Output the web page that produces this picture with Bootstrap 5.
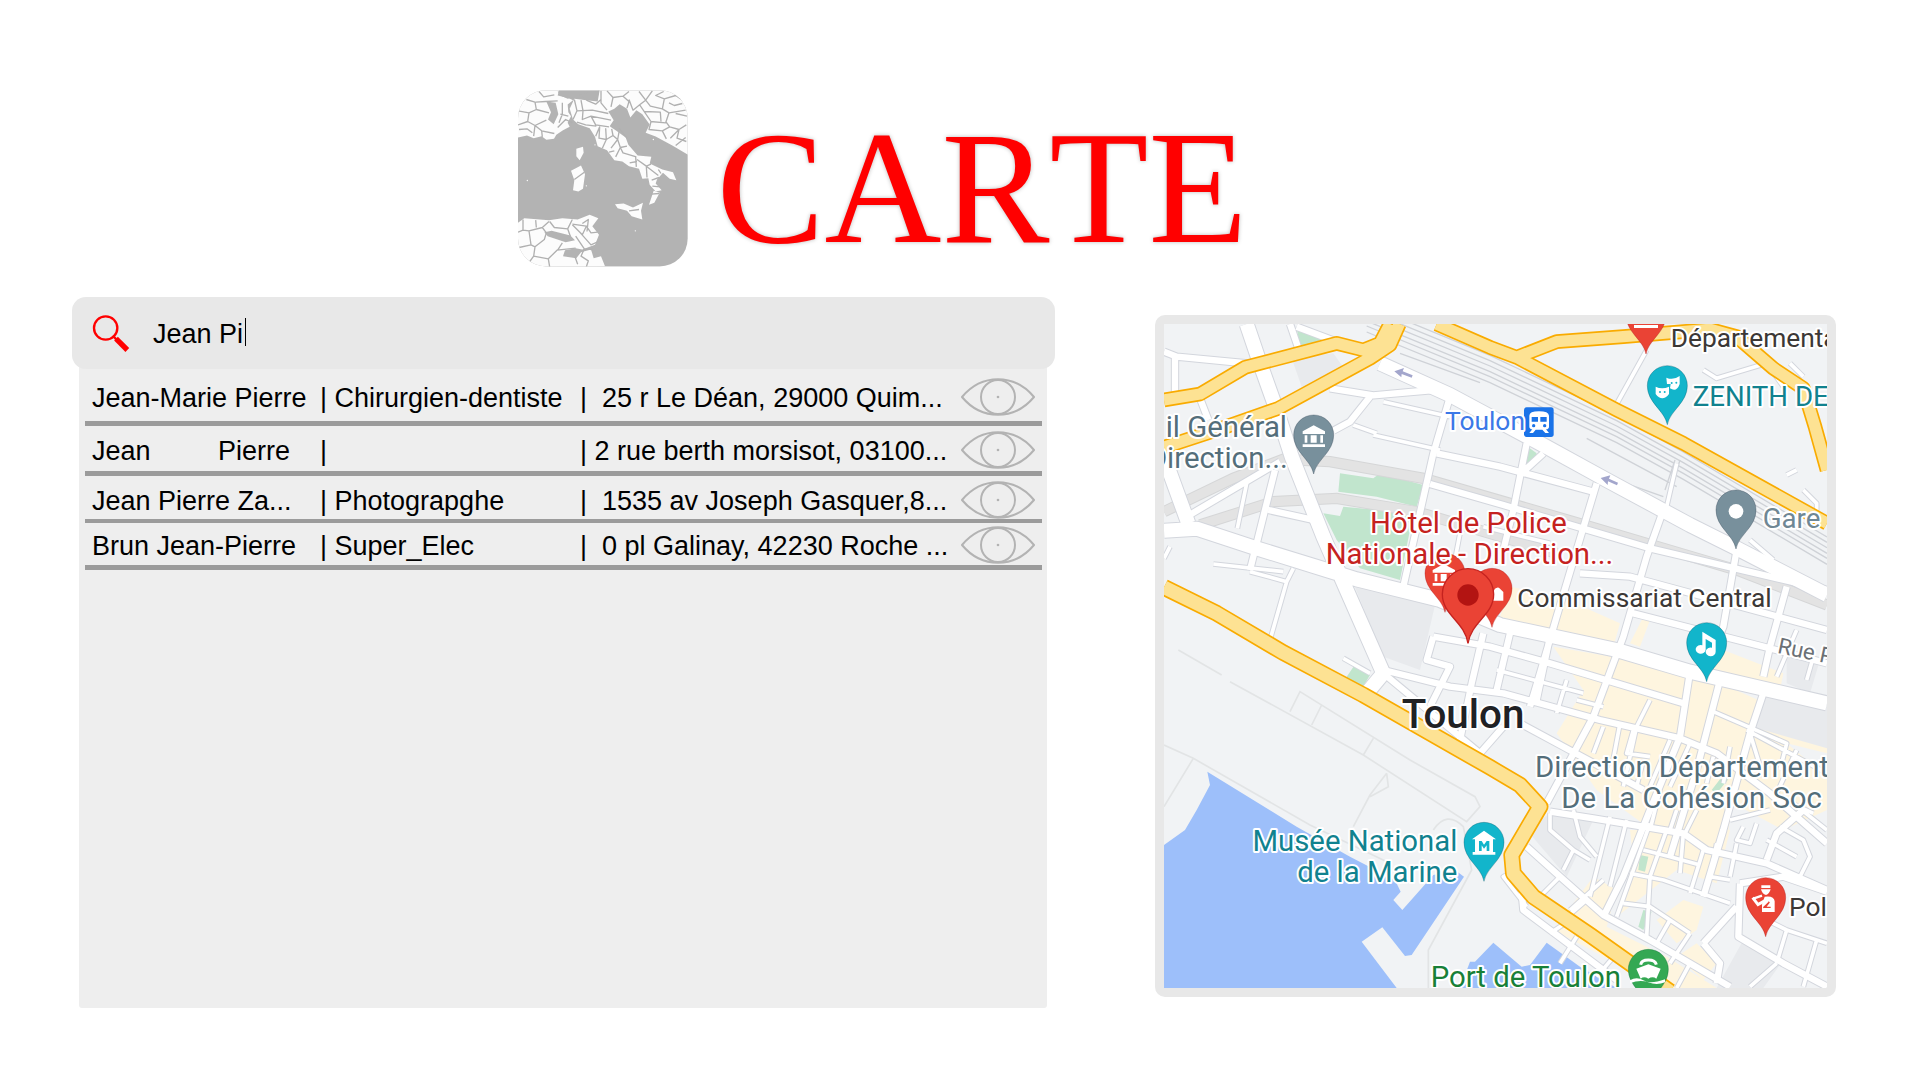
<!DOCTYPE html>
<html lang="fr">
<head>
<meta charset="utf-8">
<meta name="viewport" content="width=device-width, initial-scale=1">
<title>Carte</title>
<link href="https://cdn.jsdelivr.net/npm/bootstrap@5.3.0/dist/css/bootstrap.min.css" rel="stylesheet">
<style>
body{background:#fff;color:#000;font-family:"Liberation Sans",Arial,sans-serif;font-size:27px}
.page-head{padding:90px 0 0 27%;height:297px;gap:28px}
.brand-map{width:170px;height:177px}
.brand-title{font-family:"Liberation Serif",serif;font-size:162px;line-height:196px;font-kerning:none;color:red;text-shadow:0 0 4px #bbb}
.page-main{padding:0 84px 72px 72px;gap:100px}
.col-search{flex:983 1 0;min-width:0}
.col-map{flex:681 1 0;min-width:0;padding-top:18px}
.search-box{background:#e8e8e8;border-radius:14px;height:72px;padding:0 20px;gap:23px;z-index:1}
.search-box svg{width:38px;height:38px}
.search-input,.search-input:focus{background:transparent;border:0;box-shadow:none;color:#000;font-size:27px;line-height:36px;padding:2px 0 0;caret-color:transparent;outline:0}
.caret{left:92px;top:4px;width:1px;height:28px;background:#000}
.results{background:#eee;margin:-16px 8px 0 7px;padding:16px 5px 0 6px;border-radius:0 0 3px 3px}
.results table{table-layout:fixed;border-collapse:separate;border-spacing:0}
.results tr{--top:5px;--bottom:2px;--line:5px}
.results tr:nth-child(1){--top:9px;--bottom:5px}
.results tr:nth-child(3){--bottom:0px;--line:4px}
.results tr:nth-child(4){--top:3px;--bottom:1px}
.results td{padding:calc(var(--top) + 2px) 0 var(--bottom);border-bottom:var(--line) solid #9b9b9b;line-height:36px;white-space:pre;vertical-align:top}
.results td:first-child{padding-left:7px}
.results td:last-child{padding-top:var(--top)}
.c-name{width:235px}.c-job{width:260px}.c-eye{width:81px}
.eye-btn{display:block;width:74px;height:38px}
.eye-btn svg{display:block;width:74px;height:38px}
.map-frame{border:9px solid #e8e8e8;border-radius:10px;background:#f1f3f5}
.lbl text{font-family:Roboto,sans-serif;paint-order:stroke;stroke:#fff;stroke-width:12px;stroke-linejoin:round}
.t-wide{font-size:88px}.t-std{font-size:83px}.t-slim{font-size:79px}.t-city{font-size:121px}.t-road{font-size:66px}
</style>
</head>
<body>
<div class="d-flex flex-column min-vh-100">
<header class="page-head d-flex align-items-start">
<svg class="brand-map flex-shrink-0" viewBox="57 62 510 530" aria-hidden="true">
<defs><clipPath id="bc"><rect x="57" y="62" width="509" height="529" rx="84"/></clipPath></defs>
<g clip-path="url(#bc)">
<rect x="57" y="62" width="510" height="530" fill="#b3b3b3"/>
<g fill="#fcfcfc">
<path d="M57 62H180L176 78L210 86L222 92L206 105L208 128L216 140L206 160L212 172L192 182L172 196L165 208L142 211L128 200L104 206L84 198L57 204ZM170 100L142 96L156 128L147 150L164 164L178 134Z"/>
<path d="M302 62H567V256L520 228L470 201L440 190L452 165L430 134L412 122L394 144L384 118L362 104L346 118L328 126L344 152L332 170L352 184L380 204L388 226L416 258L457 262L452 282L490 300L522 308L532 332L512 328L492 310L474 330L470 342L488 362L470 366L452 346L448 326L430 328L420 298L390 290L370 276L346 272L324 242L296 230L288 202L272 176L238 164L222 150L212 118L226 88L262 92L296 96Z"/>
<path d="M232 238L252 232L254 250L242 272L232 260ZM216 304L246 288L258 314L252 358L238 366L222 362L226 332ZM348 404L374 402L402 414L432 400L426 424L430 450L398 440L384 424L356 416ZM464 364L482 370L466 400L450 406Z"/>
<path d="M57 460L76 446L150 452L190 446L236 450L272 436L298 446L280 470L300 496L288 526L250 540L230 536L198 542L192 560L232 566L246 548L276 540L284 566L306 560L318 590L57 592Z"/>
</g>
<g fill="#b3b3b3"><path d="M136 488L158 484L214 498L228 512L200 518L146 500ZM176 66H222V84L206 88L184 78ZM238 76L300 64L296 84L268 90Z"/></g>
<g fill="none" stroke="#b0b0b0" stroke-width="4" stroke-linejoin="round">
<path d="M57 124L90 130L112 120L108 98L82 90M112 120L150 130M90 130L86 156L57 166M86 156L108 168L142 152M108 168L104 200M108 168L128 184L166 192M128 184L130 202M110 98L140 96L176 94M60 180L84 178L100 190M120 66L134 82L166 76M190 100V134L180 160M184 134L208 140M176 174L200 150L220 160"/>
<path d="M226 90L234 124L222 150M234 124L280 122L328 132M246 92L252 124M252 124L250 150L276 140L336 152M276 140L290 166L330 172M234 158L260 166L292 170M262 92L290 104L306 90M306 64V100L324 122M324 64L342 84L336 112M342 84L372 80L390 96L384 116M372 80L390 66M390 90L402 122L422 106L440 92L420 66M440 92L460 64M440 92L454 110L490 118L496 88L470 78L494 66M490 118L510 130L560 122M496 88L530 78L556 96M510 130L500 160L454 156M422 106L456 156L450 180L490 184L502 208M490 184L512 172L540 180L562 166M512 172L500 156M540 180L534 206L562 216M540 180L514 206M510 100L526 108L550 102M530 228L560 204M530 132L564 140M436 126L484 128L486 156"/>
<path d="M290 200L302 172L300 206L322 210L310 236M322 210L320 176M322 210L342 198L356 210L336 236M356 210L364 234L350 262M364 234L384 230M342 198L338 178M360 188L356 210M364 234L372 250L412 262M410 262L412 292M392 280L414 276M414 270L442 290L456 284M442 290L444 324M442 290L478 318M478 300L486 312M458 332L480 324M226 330L256 308M460 350L484 352M456 374L480 372M390 424L420 420M346 244L330 248M360 176L384 206"/>
<path d="M72 450V482L57 488M72 482L90 484L96 526L60 534M90 484L130 474L150 456M130 474L142 490L136 510L108 532L96 526M108 532L104 560L88 582M104 560L148 568L174 542L230 536M148 568L152 592M152 456L166 474L206 478L214 500M206 478L220 450M220 464L262 470L250 496L220 466M262 470L276 490L296 488M250 462L268 450L264 486M230 500L256 538M244 490L276 526L298 516M256 538L246 560L268 574L262 592M256 538L280 540M228 562L236 584M110 452L112 474M190 520L176 542"/>
</g>
<g fill="#fff"><circle cx="262" cy="349" r="2"/><circle cx="409" cy="484" r="2"/><circle cx="85" cy="333" r="2"/><circle cx="463" cy="210" r="2"/><circle cx="288" cy="226" r="2"/></g>
</g>
</svg>
<h1 class="brand-title mb-0 fw-normal">CARTE</h1>
</header>

<main class="page-main d-flex flex-grow-1">
<section class="col-search d-flex flex-column">
<form class="search-box d-flex align-items-center position-relative" role="search">
<label for="q" class="d-flex"><svg viewBox="96 108 114 114" role="img" aria-label="Rechercher"><circle cx="137" cy="150" r="35" fill="none" stroke="red" stroke-width="7"/><path d="M158 173L172 187" stroke="red" stroke-width="7"/><path d="M168 182L202 216" stroke="red" stroke-width="16"/></svg></label>
<div class="position-relative flex-grow-1"><input id="q" class="search-input form-control rounded-0" type="text" value="Jean Pi" autocomplete="off"><span class="caret position-absolute"></span></div>
</form>
<div class="results flex-grow-1">
<svg class="d-none"><symbol id="eye" viewBox="0 0 222 114"><g fill="none" stroke="#b3b3b3" stroke-width="6" stroke-linejoin="round"><path d="M3 57C62-14 160-14 219 57C160 128 62 128 3 57Z"/><circle cx="111" cy="57" r="51"/></g><circle cx="111" cy="57" r="4" fill="#b3b3b3"/></symbol></svg>
<table class="w-100">
<colgroup><col class="c-name"><col class="c-job"><col><col class="c-eye"></colgroup>
<tbody>
<tr><td>Jean-Marie Pierre</td><td>| Chirurgien-dentiste</td><td>|  25 r Le Déan, 29000 Quim...</td><td><button type="button" class="eye-btn btn p-0 border-0" aria-label="Voir Jean-Marie Pierre"><svg><use href="#eye"/></svg></button></td></tr>
<tr><td>Jean         Pierre</td><td>|</td><td>| 2 rue berth morsisot, 03100...</td><td><button type="button" class="eye-btn btn p-0 border-0" aria-label="Voir Jean Pierre"><svg><use href="#eye"/></svg></button></td></tr>
<tr><td>Jean Pierre Za...</td><td>| Photograpghe</td><td>|  1535 av Joseph Gasquer,8...</td><td><button type="button" class="eye-btn btn p-0 border-0" aria-label="Voir Jean Pierre Za"><svg><use href="#eye"/></svg></button></td></tr>
<tr><td>Brun Jean-Pierre</td><td>| Super_Elec</td><td>|  0 pl Galinay, 42230 Roche ...</td><td><button type="button" class="eye-btn btn p-0 border-0" aria-label="Voir Brun Jean-Pierre"><svg><use href="#eye"/></svg></button></td></tr>
</tbody>
</table>
</div>
</section>

<section class="col-map">
<div class="map-frame">
<svg class="d-block w-100 h-auto" viewBox="42 42 1989 1992" role="img" aria-label="Carte de Toulon">
<defs>
<path id="pin" d="M0 117C-8 74-60 52-60 0A60 60 0 1 1 60 0C60 52 8 74 0 117Z" stroke-opacity=".35" stroke-width="3"/>
<g id="lg">
<path d="M290 42L330 160L380 300L425 440L520 680L590 840L700 1090L650 1150M42 662L140 656L320 715L530 780L620 808L870 870L1050 945L1400 1020L1620 1085L2031 1180M42 440L115 640M690 160L900 255L1170 400L1370 510L1620 645L1760 715L2031 855"/>
</g>
<g id="md">
<path d="M42 125L80 140L310 162M75 140V245M150 265L175 330M420 42L445 115M440 50L560 95M110 620L390 455M375 480L300 780M540 235L670 256L850 240L910 255M660 260L600 335L550 362M900 260L850 430L760 830M860 430L1050 470L1330 545M840 522L1060 585L1500 715L2031 840M355 600L500 632"/>
<path d="M1130 400L1090 600L1060 720M1180 430L1120 485M1340 520L1220 920L1170 1090L1140 1190M1540 600L1490 740L1420 980L1330 1220L1190 1480M1760 720L1720 950L1700 1000M1910 830L1860 1010L1840 1100M1290 790L1440 800L2031 960M1450 910L1840 1010L2031 1060M700 1080L900 1130L1060 1150L1350 1230L1590 1285L1700 1330L1860 1450L2031 1600M850 980L1020 1010L1200 1060L1600 1180M850 980L830 1050L900 1070L840 1190M1080 970L1040 1140M1000 970L965 1120L930 1290M1200 980L1160 1170M1200 1505L1330 1525L1600 1570L1670 1620L1850 1660L2031 1740M1620 1085L1590 1280L1500 1500L1420 1700L1360 1820M1710 1110L1640 1380L1560 1640M1840 1150L1800 1270L1720 1560L1660 1760M1130 1610L1230 1700L1360 1815L1500 1890L1740 2030M700 1090L990 1330L1060 1250M1110 1240L1240 1310L1480 1440M1110 1690L1120 1800L1200 1860L1400 2010M1770 1720L1900 1700L2031 1745M1850 1650L1880 1570L1960 1500M1770 1720L1765 1880L1900 1960L2031 2030M1660 1900L1760 1790M1660 1900L1710 1960L1700 2020"/>
</g>
<g id="sm">
<path d="M290 520L262 655M190 762L400 785M300 785L410 815L430 775M410 815L360 990M580 1045L660 1090M42 745L60 710M670 375L870 420M610 345L680 370M700 275L900 320M930 670L905 800M1000 650L1200 700M1490 120L1390 300M1270 250L1290 232L1400 290M1580 460L1550 590M1660 180L1700 205L1850 160L1900 230M1920 160L1960 200M1910 495L1940 480M1960 540L2000 580V640M1800 690L1870 750"/>
<path d="M1040 1080L1300 1150M1250 1110L1220 1210M1280 1170L1360 1190M1500 1170L1460 1250L1420 1430M1690 1205L1910 1300L1890 1380M1360 1250L1330 1330M1410 1240L1380 1400M1450 1260L1430 1330L1500 1340M1560 1290L1500 1430M1620 1300L1560 1430M1690 1340L1670 1420M1740 1310L1720 1420M1790 1260L2031 1390M1800 1270L1840 1400M1940 1320L1880 1450L1910 1500M1200 1510V1560L1270 1620L1240 1680M1270 1500L1290 1580L1340 1640M1270 1620L1320 1650M1380 1520L1320 1760M1430 1530L1380 1730M1500 1540L1400 1820M1550 1560L1500 1700L1490 1880M1600 1570L1590 1690M1660 1620L1620 1750M1480 1620L1560 1640L1650 1665M1440 1690L1540 1710L1740 1780M1420 1780L1500 1790L1620 1870M1230 1700L1160 1770M1360 1710L1260 1800M1310 1770L1240 1830M1740 1530L1860 1500M1780 1550L1760 1590L1800 1600L1820 1540M1760 1600L1740 1700M1700 1600L1680 1700L1740 1710M1850 1590L1940 1640M1890 1550L1960 1590L1980 1640L1940 1720M1860 1450L1990 1510M1930 1480L2031 1560M1850 1830L1910 1860L1880 1960M1910 1860L2031 1900M2000 1890L1960 2030M1880 1960L1800 2030M1560 1830L1520 1900M1620 1870L1560 1960M1620 1960L1580 2034M1280 1880L1230 1960M1400 1930L1340 2000M1990 1040L1970 1110M1940 960L1880 1100M1130 1790L1060 1700L1080 1690M1200 1870L1260 1830M1480 1350L1460 1430M1530 1440L1500 1560M1640 1500L1600 1580M1580 1500L1560 1560"/>
</g>
<g id="yl" fill="none" stroke-linejoin="round">
<path d="M42 270L150 252L285 172L560 100L640 120L690 100L720 42M42 412L200 360L385 295L660 145L720 105L748 42M860 42L1020 112L1100 142L1400 300L1600 400L2031 640M1100 142L1220 95L1420 80L1680 58L1760 80L1870 175L1960 235L1995 350L2031 480"/>
</g>
<path id="coast" fill="none" stroke-linejoin="round" d="M42 832L200 910L400 1028L640 1155L1020 1372L1110 1425L1170 1490L1085 1635L1090 1690L1150 1760L1320 1875L1440 1960L1560 2045"/>
</defs>
<rect x="42" y="42" width="1989" height="1992" fill="#f1f3f5"/>
<g fill="#e8eaed"><path d="M425 145L550 130L600 200L455 230ZM610 820L855 885L810 1080L700 1040ZM1840 1150L2031 1190V1320L1800 1250ZM1910 1040L2010 1050L1980 1150L1910 1120ZM1130 1560L1200 1510L1330 1530L1250 1700ZM1780 1890L1900 1950L1840 2034H1700Z"/></g>
<g fill="#fef5df"><path d="M1080 830L1230 860L1410 940L1390 1010L1050 920ZM1210 1010L1620 1080L2031 1260V1330L1910 1300L2031 1400V1500L1900 1560L1750 1480L1720 1640L1560 1600L1340 1440L1220 1270L1300 1140ZM1440 1560L1740 1560L1700 1720L1580 1680L1400 1820L1450 1650ZM1330 1700L1400 1740L1370 1850L1550 1940L1700 2034H1540L1210 1860ZM1480 920L1440 1000L1470 1010L1500 930ZM1600 1770L1660 1790L1640 1860L1580 1900L1520 1830ZM1720 1020L1900 1090L1890 1140L1690 1080ZM1580 1940L1640 1900L1700 1960L1660 2010Z"/></g>
<g fill="#e8eaed"><path d="M1840 1152L2031 1192V1315L1805 1250Z"/></g>
<g fill="#c1e5cd"><path d="M440 50L525 80L480 110H448ZM570 490L670 505L690 490L820 525L800 590L680 560L565 545ZM520 610L570 618L580 590L790 610L750 810L630 775L560 690ZM1130 408L1160 430L1140 482L1118 470ZM612 1068L660 1095L630 1145L580 1115ZM1710 1408H1735L1700 1450L1685 1440ZM1470 1635L1495 1640L1485 1685L1465 1680ZM1480 1800L1505 1805L1480 1860L1465 1850Z"/></g>
<g fill="#9dbffa"><path d="M172 1385L180 1425L140 1500L105 1560L42 1605V2034H740L635 1895L697 1852L765 1938L785 1935L942 1700L915 1680L850 1695L757 1800L730 1770L752 1745L735 1710L600 1640L440 1550ZM1030 1898L975 1955H960L930 2034H1400L1290 1970L1190 1898L1140 1965L1115 1970Z"/></g>
<g fill="none" stroke="#e2e4e5" stroke-width="5"><path d="M85 1020L215 1095M240 1115L640 1335L950 1535L990 1490L975 1460L780 1350M420 1205L450 1145L780 1350M485 1245L515 1185M640 1335L670 1285M42 1305L130 1345L480 1545L720 1660M130 1345L42 1490M710 1390L660 1455L610 1550M710 1390L715 1430L660 1460M850 1560Q890 1500 940 1550L965 1680L835 1920V2034"/></g>
<g fill="none" stroke="#d5d6d7" stroke-width="34"><path d="M42 605L250 505L400 448L540 455L820 505L1270 635L1760 780L2031 885M150 645L370 575L560 565L800 605L1220 730"/></g>
<g fill="none" stroke="#e3e3e3" stroke-width="28"><path d="M42 605L250 505L400 448L540 455L820 505L1270 635L1760 780L2031 885M150 645L370 575L560 565L800 605L1220 730"/></g>
<g fill="none" stroke="#cfd2d7" stroke-width="4"><path id="rail" d="M650 48L1020 200L1400 380L1600 490L2031 745"/><use href="#rail" y="-15"/><use href="#rail" y="-32"/><use href="#rail" y="-48"/><use href="#rail" y="-64"/><use href="#rail" y="18"/><path d="M750 130L990 218M1310 385L1580 530M1370 500L1540 560M1590 450L1560 545M1575 450L1545 540"/></g>
<g fill="none" stroke="#d3d6dd" stroke-linejoin="round"><use href="#sm" stroke-width="17"/><use href="#md" stroke-width="25"/><use href="#lg" stroke-width="48"/></g>
<g fill="none" stroke="#fff" stroke-linejoin="round"><use href="#sm" stroke-width="11"/><use href="#md" stroke-width="19"/><use href="#lg" stroke-width="42"/></g>
<use href="#yl" stroke="#f9ab00" stroke-width="44"/><use href="#coast" stroke="#f9ab00" stroke-width="50"/>
<use href="#yl" stroke="#fde293" stroke-width="34"/><use href="#coast" stroke="#fde293" stroke-width="40"/>
<g fill="#a3a6cc"><path d="M733 184L762 174L758 184L788 196L785 203L755 192L754 202ZM1352 504L1381 496L1377 506L1404 518L1401 526L1374 514L1373 525Z"/></g>

<g fill="#ea4335" stroke="#a11"><use href="#pin" x="885" y="790"/><use href="#pin" x="1026" y="835"/><use href="#pin" x="1488" y="15"/><use href="#pin" x="1847" y="1763"/></g>
<g fill="#12b5cb" stroke="#056"><use href="#pin" x="1552" y="227"/><use href="#pin" x="1670" y="998"/><use href="#pin" x="1002" y="1597"/></g>
<g fill="#78909c" stroke="#345"><use href="#pin" x="491" y="375"/><use href="#pin" x="1758" y="600"/></g>
<g fill="#34a853" stroke="#063"><use href="#pin" x="1495" y="1978"/></g>
<g fill="#fff">
<path id="bank" d="M458 372V364L491 346L525 364V372ZM464 376H472V398H464ZM482 376H500V398H482ZM511 376H519V398H511ZM458 403H525V411H458Z"/>
<use href="#bank" x="390" y="416"/>
<circle cx="1758" cy="604" r="22"/>
<path d="M1452 45H1524V54H1452Z"/>
<path d="M1517 230Q1536 240 1557 230V252Q1537 278 1517 252ZM1549 203Q1570 212 1589 198V222Q1580 248 1560 235L1562 222H1551Z"/>
<path d="M1657 965L1697 990V1025A15 13 0 1 1 1686 1013V998L1667 987V1019A15 13 0 1 1 1657 1006Z"/>
<path d="M1002 1562L1038 1588H1029V1626H1036V1634H968V1626H975V1588H966ZM987 1593V1623H995V1606L1002 1616L1010 1606V1623H1018V1593H1010L1002 1604L995 1593Z"/>
<path d="M1834 1726H1861V1734H1834ZM1833 1738H1862Q1858 1752 1848 1755Q1836 1752 1833 1738ZM1844 1760Q1872 1756 1874 1774V1806H1836V1784Z"/>
<path d="M1034 838A10 10 0 0 1 1050 836L1060 846V872H1028V850Z"/>
<path d="M1459 1976L1495 1963L1532 1976L1519 2006Q1508 1998 1495 2006Q1482 1998 1472 2006Z"/>
<path d="M1440 2011Q1460 1998 1480 2011T1545 2008V2017Q1520 2027 1495 2017T1440 2020Z"/>
</g>
<path d="M1472 1964Q1474 1950 1495 1950T1519 1964" fill="none" stroke="#fff" stroke-width="9"/>
<g fill="#12b5cb"><circle cx="1530" cy="246" r="3"/><circle cx="1544" cy="246" r="3"/><circle cx="1565" cy="219" r="3"/><circle cx="1579" cy="218" r="3"/></g>
<path d="M1808 1763L1824 1784L1852 1768" fill="none" stroke="#fff" stroke-width="9"/><path d="M1810 1766L1836 1757" stroke="#fff" stroke-width="7"/><path d="M1840 1793L1858 1776L1846 1792H1862" fill="none" stroke="#ea4335" stroke-width="4"/>
<path d="M954 1000C944 935 877 915 877 853A77 77 0 0 1 1031 853C1031 915 964 935 954 1000Z" fill="#ea4335" stroke="#c5221f" stroke-width="4"/><circle cx="954" cy="855" r="32" fill="#b31412"/>
<rect x="1122" y="292" width="89" height="89" rx="8" fill="#1a73e8"/>
<path d="M1138 317Q1138 304 1167 304T1197 317V350Q1197 357 1188 358L1197 369H1186L1177 359H1157L1149 369H1138L1147 358Q1138 357 1138 350Z" fill="#fff"/><g fill="#1a73e8"><path d="M1145 321H1164V335H1145ZM1171 321H1190V335H1171Z"/><circle cx="1151" cy="347" r="5"/><circle cx="1184" cy="347" r="5"/></g>

<g class="lbl">
<g class="t-wide" fill="#546e7a"><text x="411" y="380" text-anchor="end">il Général</text><text x="413" y="473" text-anchor="end">Direction...</text><text x="1155" y="1400">Direction Département</text><text x="1234" y="1493">De La Cohésion Soc</text></g>
<text class="t-std" x="1838" y="655" fill="#6f8794">Gare</text>
<text class="t-slim" x="885" y="360" fill="#3b78e7">Toulon</text>
<g class="t-wide" fill="#c5221f"><text x="660" y="668">Hôtel de Police</text><text x="527" y="763">Nationale - Direction...</text></g>
<g class="t-slim" fill="#3c3836"><text x="1102" y="890">Commissariat Central</text><text x="1562" y="110">Départementa</text><text x="1917" y="1817">Pol</text></g>
<text class="t-std" fill="#11828f" x="1628" y="288">ZENITH DE</text>
<g class="t-wide" fill="#11828f"><text x="922" y="1622" text-anchor="end">Musée National</text><text x="922" y="1715" text-anchor="end">de la Marine</text></g>
<text class="t-wide" x="842" y="2032" fill="#188038">Port de Toulon</text>
<text class="t-city" x="755" y="1255" fill="#202124" font-weight="500">Toulon</text>
<text class="t-road" transform="translate(1880 1028) rotate(12)" fill="#6b7075">Rue P</text>
</g>
</svg>
</div>
</section>
</main>
</div>
<script src="https://cdn.jsdelivr.net/npm/bootstrap@5.3.0/dist/js/bootstrap.bundle.min.js"></script>
</body>
</html>
